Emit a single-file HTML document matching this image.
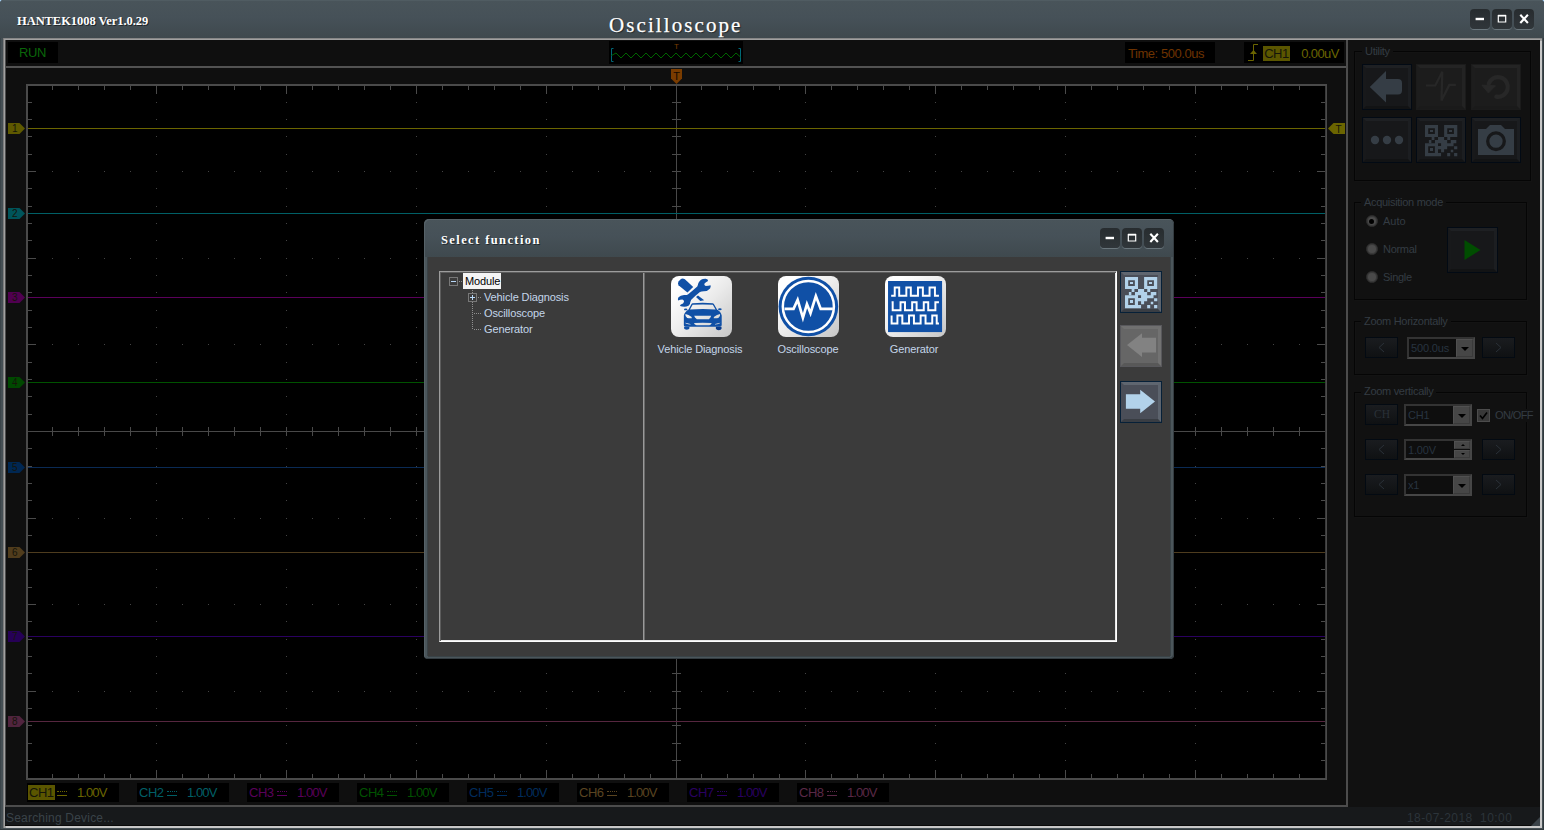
<!DOCTYPE html>
<html lang="en">
<head>
<meta charset="utf-8">
<title>HANTEK1008 Oscilloscope</title>
<style>
*{box-sizing:border-box;margin:0;padding:0}
html,body{width:1544px;height:830px;overflow:hidden;background:#a4cdf0}
body{position:relative;font-family:"Liberation Sans",sans-serif;font-size:12px;color:#30363c}
.abs,.abs>*{position:absolute}
#win{left:0;top:0;width:1544px;height:830px;background:#454f54;overflow:hidden;border-radius:4px 4px 0 0;box-shadow:inset -1px -1px 0 #30383c,inset 1px 0 0 #3a4449}
#tbar{left:0;top:0;width:1544px;height:38px;background:linear-gradient(#49545a,#465158 45%,#3f494e);box-shadow:inset 0 1px 0 #505c62}
#ttl{left:17px;top:14px;font:bold 12.500px "Liberation Serif",serif;color:#fff;white-space:nowrap;letter-spacing:-.06px;text-shadow:1px 1px 0 #20262a}
#ctitle{left:609px;top:13px;font:21px/24px "Liberation Serif",serif;color:#fff;white-space:nowrap;letter-spacing:2.080px;text-shadow:1px 1px 1px #20262a;-webkit-text-stroke:.25px #fff}
.wb{width:20px;height:20px;border-radius:4px;background:linear-gradient(#272c2f,#30363a);box-shadow:0 1px 0 #6a767c}
.wb svg{left:0;top:0}
#client{left:3px;top:38px;width:1539px;height:790px;background:#c8c8c8;border:solid;border-width:2px 0 0 2px;border-color:#a0a0a0;box-shadow:inset 1px 1px 0 #a0a0a0,inset 0 0 0 #000,-0 -0 0 #000}
#client:before{content:"";position:absolute;left:-2px;top:-2px;width:1539px;height:1px;background:#868686}
#client:after{content:"";position:absolute;left:-2px;top:-2px;width:1px;height:790px;background:#7c7c7c}
#main{left:5px;top:40px;width:1343px;height:767px;background:#0f0f0f;box-shadow:inset -2px -2px 0 #4c4c4c,inset 1px 0 0 #4c4c4c}
#rp{left:1348px;top:40px;width:192px;height:767px;background:#111}
#status{left:5px;top:807px;width:1535px;height:19px;background:#17191b;border-bottom:1px solid #0a0a0a;font-size:12px;color:#3a4349}
.bk{background:#000}
.sep{left:1px;top:26px;width:1340px;height:2px;background:#525252}
.mk{font:10px "Liberation Sans",sans-serif;fill:#15150a;text-anchor:middle}
.chb{top:783px;width:92px;height:19px;background:#000;font-size:13px;white-space:nowrap}
.chb b{position:absolute;left:2px;top:2px;font-weight:normal;line-height:15px;letter-spacing:-.5px}
.chb i{position:absolute;left:30px;top:8px;width:10px;height:5px;border-bottom:1px solid;border-top:1px dotted}
.chb u{position:absolute;left:50px;top:2px;text-decoration:none;line-height:15px;letter-spacing:-.9px}

.grp{border:1px solid #050505;box-shadow:inset 1px 1px 0 #131313,1px 1px 0 #131313}
.gl{background:#111;font-size:11px;line-height:12px;letter-spacing:-.3px;color:#343c43;padding:0 3px 0 3px;white-space:nowrap}
.ub{width:50px;height:46px;background:#17181a;border:1px solid #020a14}
.ub:before{content:"";position:absolute;left:0;top:0;right:0;bottom:0;border:3px solid;border-color:#1e2023 #1c1e21 #121314 #18191b}
.ub.d{background:#1c1c1c;border-color:#1b1b1b}
.ub.d:before{border-color:#242424 #232323 #1a1a1a #1d1d1d}
.ub svg{left:-1px;top:-1px}
.sb{width:33px;height:21px;background:linear-gradient(#1a1c1f,#0f1113);border:1px solid #030a12}
.sb svg{left:-1px;top:-1px}
.cb{width:68px;height:22px;border:2px solid;border-color:#333 #464646 #464646 #333;background:#0e0e0e;font-size:11px;color:#283440;white-space:nowrap}
.cb span{left:2px;top:3px;line-height:13px;letter-spacing:-.15px}
.cb em{left:47px;top:0;width:17px;height:18px;background:#464646;border:1px solid;border-color:#505050 #3a3a3a #3a3a3a #505050}
.cb em:after{content:"";position:absolute;left:4px;top:7px;border:4px solid transparent;border-top-color:#000;border-bottom-width:0}
.rd{width:12px;height:12px;margin:0 0 0 1px;border-radius:50%;background:#4a4a4a;border:1px solid #2a2a2a;box-shadow:inset 0 0 0 1px #3a3a3a}
.rl{font-size:11px;line-height:13px;letter-spacing:-.3px;color:#343c43;white-space:nowrap}

.sp{left:48px;width:16px;height:8px;background:#464646;border:1px solid;border-color:#505050 #3a3a3a #3a3a3a #505050}
.sp:after{content:"";position:absolute;left:5.500px;top:1.500px;border:2.500px solid transparent;border-bottom-color:#000;border-top-width:0}
.sp.dn:after{top:2px;border:2.500px solid transparent;border-top-color:#000;border-bottom-width:0}
#dlg{left:424px;top:219px;width:750px;height:440px;border-radius:5px 5px 4px 4px;background:#4b565b;overflow:hidden}
#dlg:after{content:"";position:absolute;left:0;top:0;right:0;bottom:0;border-radius:5px 5px 4px 4px;box-shadow:inset 1px 1px 0 #566268,inset -1px -1px 0 #343c41}
#dtb{left:0;top:0;width:750px;height:38px;background:linear-gradient(#49545a,#465158 45%,#3f494e)}
#dbody{left:4px;top:38px;width:742px;height:399px;background:#3b3b3b;box-shadow:-1px 0 0 #3a4347,1px 0 0 #3a4347,0 1px 0 #3a4347}
#dttl{left:17px;top:14px;font:bold 12.500px "Liberation Serif",serif;color:#fff;white-space:nowrap;letter-spacing:1.400px;text-shadow:1px 1px 0 #222a2e}
.fr{border:1px solid;border-color:#9c9c9c #fff #fff #9c9c9c;box-shadow:inset 1px 1px 0 #5c5c5c,inset -1px -1px 0 #e8e8e8}
.tr{font-size:11px;line-height:13px;color:#c4d6ea;white-space:nowrap;letter-spacing:-.12px}
.ic{width:61px;height:61px;border-radius:8px;background:linear-gradient(135deg,#fff 15%,#ececec 50%,#c6c6c6 100%)}
.ic svg{left:0;top:0}
.db{width:42px;height:42px;border:1px solid #062038;background:#4a4e58}
.db:before{content:"";position:absolute;left:0;top:0;right:0;bottom:0;border:3px solid;border-color:#5f6670 #5d646e #393d43 #4a4e58}
.db.d{border-color:#58585c;background:#666}
.db.d:before{border-color:#707070 #727272 #585858 #666}
.db svg{left:-1px;top:-1px}
</style>
</head>
<body>
<svg width="0" height="0" style="position:absolute"><defs><symbol id="qr" viewBox="125 143 583 562" width="32.300" height="31.200" overflow="visible">
<path fill-rule="evenodd" d="M125 143h235v217h-235zM183 200v103h120v-103zM215 232h55v38h-55zM470 143h238v217h-238zM527 200v103h120v-103zM558 232h55v38h-55zM125 470h235v235h-235zM183 527v120h120v-120zM215 558h55v55h-55z"/>
<path d="M245 360h50v55h-50zM360 360h110v55h-110zM527 360h53v55h-53zM195 415h45v55h-45zM305 415h220v55h-220zM590 415h100v55h-100zM360 520h165v60h-165zM415 470h225v55h-225zM305 470h55v55h-55zM415 580h55v55h-55zM360 647h55v58h-55zM525 647h55v58h-55zM650 647h58v58h-58zM650 525h58v55h-58zM590 590h45v45h-45z"/>
</symbol></defs></svg>
<div id="win" class="abs">
 <div id="tbar"></div>
 <div id="ttl">HANTEK1008 Ver1.0.29</div>
 <div id="ctitle">Oscilloscope</div>
 <div class="wb abs" style="left:1470px;top:9px"><svg width="20" height="20"><rect x="5.6" y="8.8" width="8.4" height="2.4" fill="#fff"/></svg></div>
 <div class="wb abs" style="left:1492px;top:9px"><svg width="20" height="20"><path d="M6.3 6.6h7.4v6.4h-7.4z" fill="none" stroke="#fff" stroke-width="1.2"/><path d="M6 6.6h8" stroke="#fff" stroke-width="1.6"/></svg></div>
 <div class="wb abs" style="left:1514px;top:9px"><svg width="20" height="20"><path d="M6.3 5.8l7.6 8.2M13.9 5.8l-7.6 8.2" stroke="#fff" stroke-width="2.1"/></svg></div>
 <div id="client"></div>
 <div id="rp" class="abs"></div>
 <div id="main" class="abs">
  <div class="bk" style="left:3px;top:2px;width:50px;height:21px"></div>
  <div style="left:14px;top:5px;font-size:13px;color:#0a660a;letter-spacing:-.4px">RUN</div>
  <div class="sep"></div>
 </div>
<svg id="plot" style="left:0;top:0" width="1544" height="830">
<rect x="26" y="84" width="1301" height="696" fill="#4a4a4a"/><rect x="28" y="86" width="1297" height="692" fill="#000"/><path d="M1325.500 86V778" stroke="#3a3a3a"/>
<path d="M52.5 86v4M78.5 86v4M104.5 86v4M130.5 86v4M156.5 86v8M182.5 86v4M208.5 86v4M234.5 86v4M260.5 86v4M286.5 86v8M312.5 86v4M338.5 86v4M364.5 86v4M390.5 86v4M416.5 86v8M442.5 86v4M468.5 86v4M494.5 86v4M520.5 86v4M546.5 86v8M572.5 86v4M598.5 86v4M624.5 86v4M650.5 86v4M701.5 86v4M727.5 86v4M753.5 86v4M779.5 86v4M805.5 86v8M831.5 86v4M857.5 86v4M883.5 86v4M909.5 86v4M935.5 86v8M961.5 86v4M987.5 86v4M1013.5 86v4M1039.5 86v4M1065.5 86v8M1091.5 86v4M1117.5 86v4M1143.5 86v4M1169.5 86v4M1195.5 86v8M1221.5 86v4M1247.5 86v4M1273.5 86v4M1299.5 86v4M52.5 778v-4M78.5 778v-4M104.5 778v-4M130.5 778v-4M156.5 778v-8M182.5 778v-4M208.5 778v-4M234.5 778v-4M260.5 778v-4M286.5 778v-8M312.5 778v-4M338.5 778v-4M364.5 778v-4M390.5 778v-4M416.5 778v-8M442.5 778v-4M468.5 778v-4M494.5 778v-4M520.5 778v-4M546.5 778v-8M572.5 778v-4M598.5 778v-4M624.5 778v-4M650.5 778v-4M701.5 778v-4M727.5 778v-4M753.5 778v-4M779.5 778v-4M805.5 778v-8M831.5 778v-4M857.5 778v-4M883.5 778v-4M909.5 778v-4M935.5 778v-8M961.5 778v-4M987.5 778v-4M1013.5 778v-4M1039.5 778v-4M1065.5 778v-8M1091.5 778v-4M1117.5 778v-4M1143.5 778v-4M1169.5 778v-4M1195.5 778v-8M1221.5 778v-4M1247.5 778v-4M1273.5 778v-4M1299.5 778v-4M28 102.5h4M28 119.5h4M28 136.5h4M28 154.5h4M28 171.5h8M28 188.5h4M28 206.5h4M28 223.5h4M28 240.5h4M28 258.5h8M28 275.5h4M28 292.5h4M28 310.5h4M28 327.5h4M28 344.5h8M28 362.5h4M28 379.5h4M28 396.5h4M28 414.5h4M28 448.5h4M28 466.5h4M28 483.5h4M28 500.5h4M28 518.5h8M28 535.5h4M28 552.5h4M28 569.5h4M28 587.5h4M28 604.5h8M28 621.5h4M28 639.5h4M28 656.5h4M28 673.5h4M28 691.5h8M28 708.5h4M28 725.5h4M28 743.5h4M28 760.5h4M1325 102.5h-4M1325 119.5h-4M1325 136.5h-4M1325 154.5h-4M1325 171.5h-8M1325 188.5h-4M1325 206.5h-4M1325 223.5h-4M1325 240.5h-4M1325 258.5h-8M1325 275.5h-4M1325 292.5h-4M1325 310.5h-4M1325 327.5h-4M1325 344.5h-8M1325 362.5h-4M1325 379.5h-4M1325 396.5h-4M1325 414.5h-4M1325 448.5h-4M1325 466.5h-4M1325 483.5h-4M1325 500.5h-4M1325 518.5h-8M1325 535.5h-4M1325 552.5h-4M1325 569.5h-4M1325 587.5h-4M1325 604.5h-8M1325 621.5h-4M1325 639.5h-4M1325 656.5h-4M1325 673.5h-4M1325 691.5h-8M1325 708.5h-4M1325 725.5h-4M1325 743.5h-4M1325 760.5h-4M672 102.5h9M672 119.5h9M672 136.5h9M672 154.5h9M672 171.5h9M672 188.5h9M672 206.5h9M672 223.5h9M672 240.5h9M672 258.5h9M672 275.5h9M672 292.5h9M672 310.5h9M672 327.5h9M672 344.5h9M672 362.5h9M672 379.5h9M672 396.5h9M672 414.5h9M672 448.5h9M672 466.5h9M672 483.5h9M672 500.5h9M672 518.5h9M672 535.5h9M672 552.5h9M672 569.5h9M672 587.5h9M672 604.5h9M672 621.5h9M672 639.5h9M672 656.5h9M672 673.5h9M672 691.5h9M672 708.5h9M672 725.5h9M672 743.5h9M672 760.5h9M52.5 427v9M78.5 427v9M104.5 427v9M130.5 427v9M156.5 427v9M182.5 427v9M208.5 427v9M234.5 427v9M260.5 427v9M286.5 427v9M312.5 427v9M338.5 427v9M364.5 427v9M390.5 427v9M416.5 427v9M442.5 427v9M468.5 427v9M494.5 427v9M520.5 427v9M546.5 427v9M572.5 427v9M598.5 427v9M624.5 427v9M650.5 427v9M701.5 427v9M727.5 427v9M753.5 427v9M779.5 427v9M805.5 427v9M831.5 427v9M857.5 427v9M883.5 427v9M909.5 427v9M935.5 427v9M961.5 427v9M987.5 427v9M1013.5 427v9M1039.5 427v9M1065.5 427v9M1091.5 427v9M1117.5 427v9M1143.5 427v9M1169.5 427v9M1195.5 427v9M1221.5 427v9M1247.5 427v9M1273.5 427v9M1299.5 427v9" stroke="#4a4a4a" stroke-width="1" fill="none"/>
<path d="M676.5 86V778M28 431.5H1325" stroke="#484848" stroke-width="1" fill="none"/>
<path d="M156 102.5h1M156 119.5h1M156 136.5h1M156 154.5h1M156 188.5h1M156 206.5h1M156 223.5h1M156 240.5h1M156 275.5h1M156 292.5h1M156 310.5h1M156 327.5h1M156 362.5h1M156 379.5h1M156 396.5h1M156 414.5h1M156 448.5h1M156 466.5h1M156 483.5h1M156 500.5h1M156 535.5h1M156 552.5h1M156 569.5h1M156 587.5h1M156 621.5h1M156 639.5h1M156 656.5h1M156 673.5h1M156 708.5h1M156 725.5h1M156 743.5h1M156 760.5h1M286 102.5h1M286 119.5h1M286 136.5h1M286 154.5h1M286 188.5h1M286 206.5h1M286 223.5h1M286 240.5h1M286 275.5h1M286 292.5h1M286 310.5h1M286 327.5h1M286 362.5h1M286 379.5h1M286 396.5h1M286 414.5h1M286 448.5h1M286 466.5h1M286 483.5h1M286 500.5h1M286 535.5h1M286 552.5h1M286 569.5h1M286 587.5h1M286 621.5h1M286 639.5h1M286 656.5h1M286 673.5h1M286 708.5h1M286 725.5h1M286 743.5h1M286 760.5h1M416 102.5h1M416 119.5h1M416 136.5h1M416 154.5h1M416 188.5h1M416 206.5h1M416 223.5h1M416 240.5h1M416 275.5h1M416 292.5h1M416 310.5h1M416 327.5h1M416 362.5h1M416 379.5h1M416 396.5h1M416 414.5h1M416 448.5h1M416 466.5h1M416 483.5h1M416 500.5h1M416 535.5h1M416 552.5h1M416 569.5h1M416 587.5h1M416 621.5h1M416 639.5h1M416 656.5h1M416 673.5h1M416 708.5h1M416 725.5h1M416 743.5h1M416 760.5h1M546 102.5h1M546 119.5h1M546 136.5h1M546 154.5h1M546 188.5h1M546 206.5h1M546 223.5h1M546 240.5h1M546 275.5h1M546 292.5h1M546 310.5h1M546 327.5h1M546 362.5h1M546 379.5h1M546 396.5h1M546 414.5h1M546 448.5h1M546 466.5h1M546 483.5h1M546 500.5h1M546 535.5h1M546 552.5h1M546 569.5h1M546 587.5h1M546 621.5h1M546 639.5h1M546 656.5h1M546 673.5h1M546 708.5h1M546 725.5h1M546 743.5h1M546 760.5h1M805 102.5h1M805 119.5h1M805 136.5h1M805 154.5h1M805 188.5h1M805 206.5h1M805 223.5h1M805 240.5h1M805 275.5h1M805 292.5h1M805 310.5h1M805 327.5h1M805 362.5h1M805 379.5h1M805 396.5h1M805 414.5h1M805 448.5h1M805 466.5h1M805 483.5h1M805 500.5h1M805 535.5h1M805 552.5h1M805 569.5h1M805 587.5h1M805 621.5h1M805 639.5h1M805 656.5h1M805 673.5h1M805 708.5h1M805 725.5h1M805 743.5h1M805 760.5h1M935 102.5h1M935 119.5h1M935 136.5h1M935 154.5h1M935 188.5h1M935 206.5h1M935 223.5h1M935 240.5h1M935 275.5h1M935 292.5h1M935 310.5h1M935 327.5h1M935 362.5h1M935 379.5h1M935 396.5h1M935 414.5h1M935 448.5h1M935 466.5h1M935 483.5h1M935 500.5h1M935 535.5h1M935 552.5h1M935 569.5h1M935 587.5h1M935 621.5h1M935 639.5h1M935 656.5h1M935 673.5h1M935 708.5h1M935 725.5h1M935 743.5h1M935 760.5h1M1065 102.5h1M1065 119.5h1M1065 136.5h1M1065 154.5h1M1065 188.5h1M1065 206.5h1M1065 223.5h1M1065 240.5h1M1065 275.5h1M1065 292.5h1M1065 310.5h1M1065 327.5h1M1065 362.5h1M1065 379.5h1M1065 396.5h1M1065 414.5h1M1065 448.5h1M1065 466.5h1M1065 483.5h1M1065 500.5h1M1065 535.5h1M1065 552.5h1M1065 569.5h1M1065 587.5h1M1065 621.5h1M1065 639.5h1M1065 656.5h1M1065 673.5h1M1065 708.5h1M1065 725.5h1M1065 743.5h1M1065 760.5h1M1195 102.5h1M1195 119.5h1M1195 136.5h1M1195 154.5h1M1195 188.5h1M1195 206.5h1M1195 223.5h1M1195 240.5h1M1195 275.5h1M1195 292.5h1M1195 310.5h1M1195 327.5h1M1195 362.5h1M1195 379.5h1M1195 396.5h1M1195 414.5h1M1195 448.5h1M1195 466.5h1M1195 483.5h1M1195 500.5h1M1195 535.5h1M1195 552.5h1M1195 569.5h1M1195 587.5h1M1195 621.5h1M1195 639.5h1M1195 656.5h1M1195 673.5h1M1195 708.5h1M1195 725.5h1M1195 743.5h1M1195 760.5h1M52 171.5h1M78 171.5h1M104 171.5h1M130 171.5h1M156 171.5h1M182 171.5h1M208 171.5h1M234 171.5h1M260 171.5h1M286 171.5h1M312 171.5h1M338 171.5h1M364 171.5h1M390 171.5h1M416 171.5h1M442 171.5h1M468 171.5h1M494 171.5h1M520 171.5h1M546 171.5h1M572 171.5h1M598 171.5h1M624 171.5h1M650 171.5h1M676 171.5h1M701 171.5h1M727 171.5h1M753 171.5h1M779 171.5h1M805 171.5h1M831 171.5h1M857 171.5h1M883 171.5h1M909 171.5h1M935 171.5h1M961 171.5h1M987 171.5h1M1013 171.5h1M1039 171.5h1M1065 171.5h1M1091 171.5h1M1117 171.5h1M1143 171.5h1M1169 171.5h1M1195 171.5h1M1221 171.5h1M1247 171.5h1M1273 171.5h1M1299 171.5h1M52 258.5h1M78 258.5h1M104 258.5h1M130 258.5h1M156 258.5h1M182 258.5h1M208 258.5h1M234 258.5h1M260 258.5h1M286 258.5h1M312 258.5h1M338 258.5h1M364 258.5h1M390 258.5h1M416 258.5h1M442 258.5h1M468 258.5h1M494 258.5h1M520 258.5h1M546 258.5h1M572 258.5h1M598 258.5h1M624 258.5h1M650 258.5h1M676 258.5h1M701 258.5h1M727 258.5h1M753 258.5h1M779 258.5h1M805 258.5h1M831 258.5h1M857 258.5h1M883 258.5h1M909 258.5h1M935 258.5h1M961 258.5h1M987 258.5h1M1013 258.5h1M1039 258.5h1M1065 258.5h1M1091 258.5h1M1117 258.5h1M1143 258.5h1M1169 258.5h1M1195 258.5h1M1221 258.5h1M1247 258.5h1M1273 258.5h1M1299 258.5h1M52 344.5h1M78 344.5h1M104 344.5h1M130 344.5h1M156 344.5h1M182 344.5h1M208 344.5h1M234 344.5h1M260 344.5h1M286 344.5h1M312 344.5h1M338 344.5h1M364 344.5h1M390 344.5h1M416 344.5h1M442 344.5h1M468 344.5h1M494 344.5h1M520 344.5h1M546 344.5h1M572 344.5h1M598 344.5h1M624 344.5h1M650 344.5h1M676 344.5h1M701 344.5h1M727 344.5h1M753 344.5h1M779 344.5h1M805 344.5h1M831 344.5h1M857 344.5h1M883 344.5h1M909 344.5h1M935 344.5h1M961 344.5h1M987 344.5h1M1013 344.5h1M1039 344.5h1M1065 344.5h1M1091 344.5h1M1117 344.5h1M1143 344.5h1M1169 344.5h1M1195 344.5h1M1221 344.5h1M1247 344.5h1M1273 344.5h1M1299 344.5h1M52 518.5h1M78 518.5h1M104 518.5h1M130 518.5h1M156 518.5h1M182 518.5h1M208 518.5h1M234 518.5h1M260 518.5h1M286 518.5h1M312 518.5h1M338 518.5h1M364 518.5h1M390 518.5h1M416 518.5h1M442 518.5h1M468 518.5h1M494 518.5h1M520 518.5h1M546 518.5h1M572 518.5h1M598 518.5h1M624 518.5h1M650 518.5h1M676 518.5h1M701 518.5h1M727 518.5h1M753 518.5h1M779 518.5h1M805 518.5h1M831 518.5h1M857 518.5h1M883 518.5h1M909 518.5h1M935 518.5h1M961 518.5h1M987 518.5h1M1013 518.5h1M1039 518.5h1M1065 518.5h1M1091 518.5h1M1117 518.5h1M1143 518.5h1M1169 518.5h1M1195 518.5h1M1221 518.5h1M1247 518.5h1M1273 518.5h1M1299 518.5h1M52 604.5h1M78 604.5h1M104 604.5h1M130 604.5h1M156 604.5h1M182 604.5h1M208 604.5h1M234 604.5h1M260 604.5h1M286 604.5h1M312 604.5h1M338 604.5h1M364 604.5h1M390 604.5h1M416 604.5h1M442 604.5h1M468 604.5h1M494 604.5h1M520 604.5h1M546 604.5h1M572 604.5h1M598 604.5h1M624 604.5h1M650 604.5h1M676 604.5h1M701 604.5h1M727 604.5h1M753 604.5h1M779 604.5h1M805 604.5h1M831 604.5h1M857 604.5h1M883 604.5h1M909 604.5h1M935 604.5h1M961 604.5h1M987 604.5h1M1013 604.5h1M1039 604.5h1M1065 604.5h1M1091 604.5h1M1117 604.5h1M1143 604.5h1M1169 604.5h1M1195 604.5h1M1221 604.5h1M1247 604.5h1M1273 604.5h1M1299 604.5h1M52 691.5h1M78 691.5h1M104 691.5h1M130 691.5h1M156 691.5h1M182 691.5h1M208 691.5h1M234 691.5h1M260 691.5h1M286 691.5h1M312 691.5h1M338 691.5h1M364 691.5h1M390 691.5h1M416 691.5h1M442 691.5h1M468 691.5h1M494 691.5h1M520 691.5h1M546 691.5h1M572 691.5h1M598 691.5h1M624 691.5h1M650 691.5h1M676 691.5h1M701 691.5h1M727 691.5h1M753 691.5h1M779 691.5h1M805 691.5h1M831 691.5h1M857 691.5h1M883 691.5h1M909 691.5h1M935 691.5h1M961 691.5h1M987 691.5h1M1013 691.5h1M1039 691.5h1M1065 691.5h1M1091 691.5h1M1117 691.5h1M1143 691.5h1M1169 691.5h1M1195 691.5h1M1221 691.5h1M1247 691.5h1M1273 691.5h1M1299 691.5h1" stroke="#444" stroke-width="1" fill="none"/>
<path d="M28 128.5H1325" stroke="#6b6500"/>
<path d="M28 213.5H1325" stroke="#005f66"/>
<path d="M28 297.5H1325" stroke="#5a005a"/>
<path d="M28 382.5H1325" stroke="#005200"/>
<path d="M28 467.5H1325" stroke="#0a2a54"/>
<path d="M28 552.5H1325" stroke="#4e3c1e"/>
<path d="M28 636.5H1325" stroke="#2a0060"/>
<path d="M28 721.5H1325" stroke="#56263f"/>
<path d="M8 123h11.5l5.5 5.5l-5.5 5.5h-11.5z" fill="#5e5900"/><text x="14.800" y="132.2" class="mk">1</text>
<path d="M8 208h11.5l5.5 5.5l-5.5 5.5h-11.5z" fill="#00545a"/><text x="14.800" y="217.2" class="mk">2</text>
<path d="M8 292h11.5l5.5 5.5l-5.5 5.5h-11.5z" fill="#500050"/><text x="14.800" y="301.2" class="mk">3</text>
<path d="M8 377h11.5l5.5 5.5l-5.5 5.5h-11.5z" fill="#004800"/><text x="14.800" y="386.2" class="mk">4</text>
<path d="M8 462h11.5l5.5 5.5l-5.5 5.5h-11.5z" fill="#002752"/><text x="14.800" y="471.2" class="mk">5</text>
<path d="M8 547h11.5l5.5 5.5l-5.5 5.5h-11.5z" fill="#503c1c"/><text x="14.800" y="556.2" class="mk">6</text>
<path d="M8 631h11.5l5.5 5.5l-5.5 5.5h-11.5z" fill="#260056"/><text x="14.800" y="640.2" class="mk">7</text>
<path d="M8 716h11.5l5.5 5.5l-5.5 5.5h-11.5z" fill="#50243e"/><text x="14.800" y="725.2" class="mk">8</text>
</svg>
<svg class="abs" style="left:0;top:0;position:absolute" width="1544" height="830">
 <rect x="609" y="41" width="134" height="23" fill="#000"/>
 <path d="M613.5 48.5h-2v13h2M738.500 48.5h2v13h-2" fill="none" stroke="#006878"/>
 <path d="M611.5 55.500L616 53l5 5l5 -5l5 5l5 -5l5 5l5 -5l5 5l5 -5l5 5l5 -5l5 5l5 -5l5 5l5 -5l5 5l5 -5l5 5l5 -5l5 5l5 -5l5 5l5 -5l5 5l5 -5l4.500 4" fill="none" stroke="#006400" stroke-width="1"/>
 <text x="676.5" y="49" style="font:8px 'Liberation Sans',sans-serif;fill:#7a3c00;text-anchor:middle">T</text>
 <path d="M671 69h11v9.500l-5.500 5.500l-5.500 -5.500z" fill="#7a3c00"/>
 <text x="676.500" y="80" style="font:11px 'Liberation Sans',sans-serif;fill:#140a00;text-anchor:middle">T</text>
 <path d="M1328 128.500l5.500 -5.500h11.500v11h-11.500z" fill="#6b6500"/>
 <text x="1338.500" y="132.500" style="font:10px 'Liberation Sans',sans-serif;fill:#15150a;text-anchor:middle">T</text>
 <rect x="1125" y="42" width="90" height="21" fill="#000"/>
 <text x="1128" y="58" style="font:13px 'Liberation Sans',sans-serif;fill:#6e3300;letter-spacing:-.45px">Time: 500.0us</text>
 <rect x="1244" y="42" width="100" height="21" fill="#000"/>
 <path d="M1248 60.500H1253.500V44.500H1258" fill="none" stroke="#6b6500"/>
 <path d="M1250 54L1253.500 50L1257 54z" fill="#6b6500"/>
 <rect x="1263" y="46" width="27" height="15" fill="#5b5600"/>
 <text x="1264.200" y="58" style="font:13px 'Liberation Sans',sans-serif;fill:#15150a;letter-spacing:-.5px">CH1</text>
 <text x="1301.200" y="58" style="font:13px 'Liberation Sans',sans-serif;fill:#6b6500;letter-spacing:-.6px">0.00uV</text>
</svg>
<div class="chb abs" style="left:27px;color:#6b6500"><b style="background:#5b5600;color:#15150a;left:1px;padding:0 1px 0 1px;width:27px">CH1</b><i></i><u>1.00V</u></div>
<div class="chb abs" style="left:137px;color:#005f66"><b>CH2</b><i></i><u>1.00V</u></div>
<div class="chb abs" style="left:247px;color:#5a005a"><b>CH3</b><i></i><u>1.00V</u></div>
<div class="chb abs" style="left:357px;color:#005200"><b>CH4</b><i></i><u>1.00V</u></div>
<div class="chb abs" style="left:467px;color:#002c5c"><b>CH5</b><i></i><u>1.00V</u></div>
<div class="chb abs" style="left:577px;color:#5a4420"><b>CH6</b><i></i><u>1.00V</u></div>
<div class="chb abs" style="left:687px;color:#2a0060"><b>CH7</b><i></i><u>1.00V</u></div>
<div class="chb abs" style="left:797px;color:#5a2846"><b>CH8</b><i></i><u>1.00V</u></div>

 <div id="rpc" class="abs" style="left:0;top:0">
  <div class="grp" style="left:1354px;top:51px;width:177px;height:130px"></div>
  <div class="gl" style="left:1362px;top:45px">Utility</div>
  <div class="ub abs" style="left:1362px;top:64px"><svg width="50" height="46"><path d="M7.800 23L24 7v8h12a4 4 0 0 1 4 4v7.500a4 4 0 0 1 -4 4h-12v8z" fill="#353d45"/></svg></div>
  <div class="ub d abs" style="left:1416px;top:64px"><svg width="50" height="46"><path d="M10 21.500h9.300l7 -13.800l-.8 28.800l7.800 -15.600h6.600" fill="none" stroke="#272727" stroke-width="2.200"/></svg></div>
  <div class="ub d abs" style="left:1471px;top:64px"><svg width="50" height="46"><path d="M17.800 19.650A9.800 9.800 0 1 1 25.300 32.650" fill="none" stroke="#272727" stroke-width="4.200" stroke-linecap="round"/><path d="M10.900 21.200L24.500 21.800L17.400 29z" fill="#272727" stroke="#272727" stroke-width="1" stroke-linejoin="round"/></svg></div>
  <div class="ub abs" style="left:1362px;top:117px"><svg width="50" height="46"><circle cx="13" cy="23" r="4.200" fill="#353d45"/><circle cx="25" cy="23" r="4.200" fill="#353d45"/><circle cx="37" cy="23" r="4.200" fill="#353d45"/></svg></div>
  <div class="ub abs" style="left:1416px;top:117px"><svg width="50" height="46" viewBox="0 0 50 46"><use href="#qr" x="9" y="8" fill="#353d45"/></svg></div>
  <div class="ub abs" style="left:1471px;top:117px"><svg width="50" height="46"><path d="M7 12h8l4 -4h11l4 4h9v26h-36z" fill="#353d45"/><circle cx="25" cy="24.200" r="8.300" fill="none" stroke="#17181a" stroke-width="3.300"/></svg></div>

  <div class="grp" style="left:1354px;top:202px;width:173px;height:98px"></div>
  <div class="gl" style="left:1361px;top:196px">Acquisition mode</div>
  <div class="rd" style="left:1365px;top:215px"></div><div style="left:1369px;top:219px;width:5px;height:5px;border-radius:50%;background:#000"></div>
  <div class="rl" style="left:1383px;top:215px;letter-spacing:0">Auto</div>
  <div class="rd" style="left:1365px;top:243px"></div><div class="rl" style="left:1383px;top:243px">Normal</div>
  <div class="rd" style="left:1365px;top:271px"></div><div class="rl" style="left:1383px;top:271px">Single</div>
  <div class="ub abs" style="left:1447px;top:227px;width:51px"><svg width="51" height="46"><path d="M17.500 13l16 10l-16 10z" fill="#004d00"/></svg></div>

  <div class="grp" style="left:1354px;top:321px;width:173px;height:54px"></div>
  <div class="gl" style="left:1361px;top:315px">Zoom Horizontally</div>
  <div class="sb abs" style="left:1365px;top:337px"><svg width="33" height="21"><path d="M19 6l-5 4.500l5 4.500" fill="none" stroke="#2a3138"/></svg></div>
  <div class="cb abs" style="left:1407px;top:337px"><span>500.0us</span><em></em></div>
  <div class="sb abs" style="left:1482px;top:337px"><svg width="33" height="21"><path d="M14 6l5 4.500l-5 4.500" fill="none" stroke="#2a3138"/></svg></div>

  <div class="grp" style="left:1354px;top:392px;width:173px;height:125px"></div>
  <div class="gl" style="left:1361px;top:385px">Zoom vertically</div>
  <div class="sb abs" style="left:1365px;top:404px"><div style="left:7px;top:2px;font:11.500px 'Liberation Serif',serif;color:#2a3138;letter-spacing:0;left:8px;top:3px">CH</div></div>
  <div class="cb abs" style="left:1404px;top:404px"><span>CH1</span><em></em></div>
  <div style="left:1477px;top:409px;width:13px;height:13px;background:#383838;border:1px solid #4c4c4c"></div>
  <svg style="left:1477px;top:409px" width="13" height="13"><path d="M3 6.500l2.500 3l4.500 -6" fill="none" stroke="#000" stroke-width="1.700"/></svg>
  <div class="rl" style="left:1493px;top:409px;letter-spacing:-.6px;background:#111;padding:0 1px 0 2px">ON/OFF</div>
  <div class="sb abs" style="left:1365px;top:439px"><svg width="33" height="21"><path d="M19 6l-5 4.500l5 4.500" fill="none" stroke="#2a3138"/></svg></div>
  <div class="cb abs" style="left:1404px;top:439px;height:21px"><span>1.00V</span><i class="sp" style="top:0"></i><i class="sp dn" style="top:9px"></i></div>
  <div class="sb abs" style="left:1482px;top:439px"><svg width="33" height="21"><path d="M14 6l5 4.500l-5 4.500" fill="none" stroke="#2a3138"/></svg></div>
  <div class="sb abs" style="left:1365px;top:474px"><svg width="33" height="21"><path d="M19 6l-5 4.500l5 4.500" fill="none" stroke="#2a3138"/></svg></div>
  <div class="cb abs" style="left:1404px;top:474px"><span>x1</span><em></em></div>
  <div class="sb abs" style="left:1482px;top:474px"><svg width="33" height="21"><path d="M14 6l5 4.500l-5 4.500" fill="none" stroke="#2a3138"/></svg></div>
 </div>

 <div id="status" class="abs">
  <div style="left:1px;top:4px;letter-spacing:.2px">Searching Device...</div>
  <div style="left:1402px;top:4px;color:#2c343a;white-space:pre;letter-spacing:.42px">18-07-2018  10:00</div>
  <svg style="left:1526px;top:10px" width="9" height="9"><path d="M9 0v9h-9z" fill="#3a4248"/></svg>
 </div>

 <div id="dlg" class="abs">
  <div id="dtb"></div>
  <div id="dbody"></div>
  <div id="dttl">Select function</div>
  <div class="wb abs" style="left:676px;top:9px"><svg width="20" height="20"><rect x="5.600" y="8.800" width="8.400" height="2.400" fill="#fff"/></svg></div>
  <div class="wb abs" style="left:698px;top:9px"><svg width="20" height="20"><path d="M6.300 6.600h7.400v6.400h-7.400z" fill="none" stroke="#fff" stroke-width="1.200"/><path d="M6 6.600h8" stroke="#fff" stroke-width="1.600"/></svg></div>
  <div class="wb abs" style="left:720px;top:9px"><svg width="20" height="20"><path d="M6.300 5.800l7.600 8.200M13.900 5.800l-7.600 8.200" stroke="#fff" stroke-width="2.100"/></svg></div>
  <div class="fr" style="left:15px;top:52px;width:678px;height:371px"></div>
  <div style="left:219px;top:54px;width:2px;height:367px;background:#9a9a9a;box-shadow:inset -1px 0 0 #6a6a6a"></div>
  <svg style="left:0;top:0" width="230" height="120">
   <path d="M35 62.500h4M48.500 71v40M54 78.500h4M50 94.500h8M50 110.500h8" fill="none" stroke="#909090" stroke-dasharray="1 1"/>
   <rect x="25.500" y="58.500" width="8" height="8" fill="#3b3b3b" stroke="#787878"/><path d="M27 62.500h5" stroke="#b8d8f8"/>
   <rect x="44.500" y="74.500" width="8" height="8" fill="#3b3b3b" stroke="#787878"/><path d="M46 78.500h5M48.500 76v5" stroke="#b8d8f8"/>
  </svg>
  <div class="tr" style="left:39px;top:54px;width:38px;height:16px;background:#f4f4f4;color:#000;padding:2px 0 0 2px">Module</div>
  <div class="tr" style="left:60px;top:72px">Vehicle Diagnosis</div>
  <div class="tr" style="left:60px;top:88px">Oscilloscope</div>
  <div class="tr" style="left:60px;top:104px">Generator</div>
  <div class="ic abs" style="left:247px;top:57px"><svg width="61" height="61" viewBox="0 0 61 61"><g fill="#1050a6">
<g transform="translate(1 .6) scale(0.04817)">
<path d="M185 48Q225 32 268 55L440 215L320 330L135 178Q112 140 135 100Z"/>
<path d="M498 425L540 390L668 492L588 505Z"/>
<path d="M548 135Q590 40 700 45Q755 55 748 92Q700 110 672 150Q660 180 700 195Q760 195 800 182Q812 200 790 245Q745 300 660 305Q610 305 580 320Q480 400 400 480Q375 530 372 570Q350 615 300 622Q220 630 170 612Q160 590 185 578Q240 560 250 520Q250 485 215 475Q170 480 128 495Q112 470 135 430Q175 385 250 380Q300 385 330 370Q430 290 525 205Q540 170 548 135Z"/>
</g>
<g transform="translate(9 23.600) scale(0.04817)">
<path fill-rule="evenodd" d="M258 78Q470 52 682 78Q700 82 712 105L768 205Q850 250 866 330L866 535Q860 562 830 562L115 562Q80 558 80 530L80 330Q95 255 178 205L230 105Q240 82 258 78ZM262 108L208 205Q470 190 738 205L682 108Q470 95 262 108ZM112 300Q100 340 150 380Q200 395 245 385Q248 368 235 355Q180 315 112 300ZM832 300Q845 340 795 380Q745 395 700 385Q697 368 710 355Q765 315 832 300ZM295 335Q300 370 350 410L600 410Q640 370 648 335ZM290 488Q300 525 345 532L610 532Q650 525 658 488Q470 478 290 488ZM105 480Q110 505 215 518Q225 512 215 505Q150 485 105 480ZM838 480Q833 505 728 518Q718 512 728 505Q793 485 838 480Z"/>
<ellipse cx="118" cy="203" rx="36" ry="19"/><ellipse cx="828" cy="200" rx="38" ry="20"/>
<path d="M85 562H195V600Q190 622 140 624Q90 622 85 600Z"/><path fill="#0a3c8c" d="M745 562H862V605Q855 635 805 638Q750 630 745 600Z"/>
</g></g></svg></div>
  <div class="ic abs" style="left:354px;top:57px"><svg width="61" height="61" viewBox="78 72 679 683"><circle cx="416" cy="414" r="334" fill="#1050a6"/><circle cx="416" cy="414" r="286" fill="none" stroke="#fff" stroke-width="28"/><path d="M150 440H250L296 338L355 540L400 386L440 488L500 296L554 440H690" fill="none" stroke="#fff" stroke-width="30" stroke-linejoin="miter" stroke-miterlimit="10"/></svg></div>
  <div class="ic abs" style="left:461px;top:57px"><svg width="61" height="61" viewBox="78 72 679 683"><rect x="110" y="128" width="605" height="572" fill="#1050a6"/><path d="M145 292H185V200H235V292H315V200H365V292H445V200H500V292H575V200H635V292H680M150 365H162V455H250V365H300V455H380V365H430V455H510V365H560V455H640V365H680M150 515V605H215V515H270V605H345V515H400V605H475V515H530V605H605V515H655V605H680" fill="none" stroke="#fff" stroke-width="22"/></svg></div>
  <div class="tr" style="left:216px;top:124px;width:120px;text-align:center">Vehicle Diagnosis</div>
  <div class="tr" style="left:324px;top:124px;width:120px;text-align:center">Oscilloscope</div>
  <div class="tr" style="left:430px;top:124px;width:120px;text-align:center">Generator</div>
  <div class="db abs" style="left:696px;top:52px"><svg width="42" height="42" viewBox="0 0 42 42"><use href="#qr" x="5" y="6" fill="#b2d2ea"/></svg></div>
  <div class="db d abs" style="left:696px;top:106px"><svg width="42" height="42"><path d="M7 20l15 -11.700v4.500h14v14.600h-14v4.500z" fill="#828282"/></svg></div>
  <div class="db abs" style="left:696px;top:162px"><svg width="42" height="42"><path d="M35 20.500l-14.800 -11.700v4.400h-14.300v14.600h14.300v4.400z" fill="#b2d2ea"/></svg></div>
 </div>
</div>
</body>
</html>
